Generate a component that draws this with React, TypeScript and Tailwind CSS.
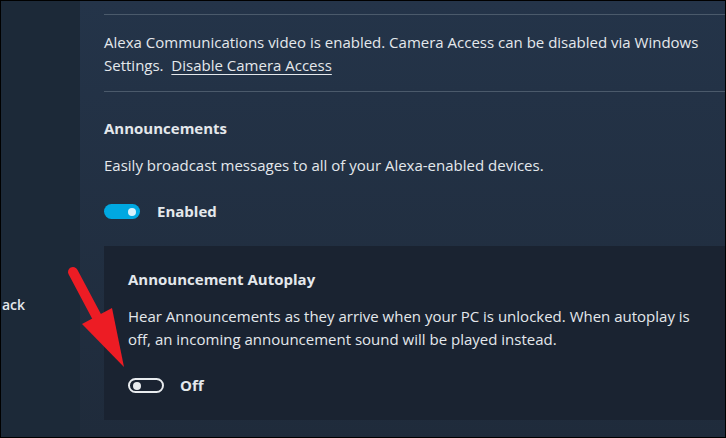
import React from "react";

const font = { fontFamily: '"Open Sans", "Noto Sans", sans-serif' };

const Toggle: React.FC<{ on: boolean }> = ({ on }) =>
  on ? (
    <div className="w-[36px] h-[15px] rounded-full bg-[#00a8e1] flex items-center justify-end pr-[4px]">
      <div className="w-[8px] h-[8px] rounded-full bg-[#d8f1fb]" />
    </div>
  ) : (
    <div className="w-[36px] h-[15px] rounded-full border-2 border-[#e8ebee] flex items-center pl-[3px]">
      <div className="w-[8px] h-[8px] rounded-full bg-[#e8ebee]" />
    </div>
  );

const App: React.FC = () => {
  return (
    <div
      className="w-[726px] h-[438px] flex border border-black overflow-hidden relative text-[#e4e8ec]"
      style={font}
    >
      {/* 왼쪽 사이드바 - 잘려 보이는 Back 링크 */}
      <aside className="w-[79px] shrink-0 bg-[#1c2938]">
        <div className="mt-[293px] ml-[1px] text-[14px] leading-[22px] font-semibold">ack</div>
      </aside>

      {/* 메인 영역 */}
      <main className="flex-1 bg-gradient-to-b from-[#243449] to-[#1f2b3b] pl-[24px] pt-[13px]">
        <div className="h-px bg-[#4b5a6b]" />
        <p className="mt-[16px] text-[15px] leading-[23px] pr-[20px]">
          Alexa Communications video is enabled. Camera Access can be disabled via Windows
          Settings.&nbsp;&nbsp;
          <span className="underline underline-offset-[3px]">Disable Camera Access</span>
        </p>
        <div className="mt-[14px] h-px bg-[#4b5a6b]" />

        <h2 className="mt-[25px] text-[15px] leading-[23px] font-bold">Announcements</h2>
        <p className="mt-[14px] text-[15px] leading-[23px]">
          Easily broadcast messages to all of your Alexa-enabled devices.
        </p>
        <div className="mt-[27px] flex items-center gap-[17px]">
          <Toggle on />
          <span className="text-[15px] leading-[15px] font-bold">Enabled</span>
        </div>

        {/* 자동 재생 패널 */}
        <section className="mt-[27px] h-[174px] bg-[#1a2331] pl-[24px] pt-[22px]">
          <h3 className="text-[15px] leading-[23px] font-bold">Announcement Autoplay</h3>
          <p className="mt-[14px] text-[15px] leading-[23px] pr-[10px]">
            Hear Announcements as they arrive when your PC is unlocked. When autoplay is
            off, an incoming announcement sound will be played instead.
          </p>
          <div className="mt-[27px] flex items-center gap-[16px]">
            <Toggle on={false} />
            <span className="text-[15px] leading-[15px] font-bold">Off</span>
          </div>
        </section>
      </main>

      {/* 빨간 화살표 */}
      <svg
        className="absolute left-0 top-0 pointer-events-none"
        width="726"
        height="438"
        viewBox="0 0 726 438"
      >
        <line x1="72" y1="271" x2="98" y2="320" stroke="#ed1c24" strokeWidth="10" strokeLinecap="round" />
        <polygon points="81,323 111,307 123,366" fill="#ed1c24" />
      </svg>
    </div>
  );
};

export default App;
